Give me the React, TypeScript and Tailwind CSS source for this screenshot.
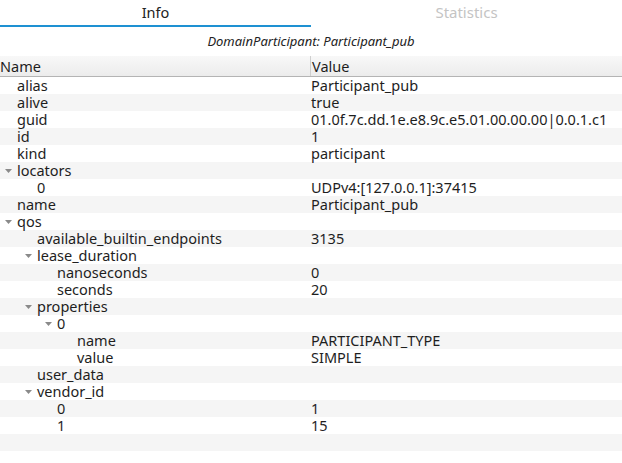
import React from "react";

type Row = { name: string; value?: string; level: number; open?: boolean };

const rows: Row[] = [
  { name: "alias", value: "Participant_pub", level: 0 },
  { name: "alive", value: "true", level: 0 },
  { name: "guid", value: "01.0f.7c.dd.1e.e8.9c.e5.01.00.00.00|0.0.1.c1", level: 0 },
  { name: "id", value: "1", level: 0 },
  { name: "kind", value: "participant", level: 0 },
  { name: "locators", level: 0, open: true },
  { name: "0", value: "UDPv4:[127.0.0.1]:37415", level: 1 },
  { name: "name", value: "Participant_pub", level: 0 },
  { name: "qos", level: 0, open: true },
  { name: "available_builtin_endpoints", value: "3135", level: 1 },
  { name: "lease_duration", level: 1, open: true },
  { name: "nanoseconds", value: "0", level: 2 },
  { name: "seconds", value: "20", level: 2 },
  { name: "properties", level: 1, open: true },
  { name: "0", level: 2, open: true },
  { name: "name", value: "PARTICIPANT_TYPE", level: 3 },
  { name: "value", value: "SIMPLE", level: 3 },
  { name: "user_data", level: 1 },
  { name: "vendor_id", level: 1, open: true },
  { name: "0", value: "1", level: 2 },
  { name: "1", value: "15", level: 2 },
  { name: "", level: 0 },
];

const indent = ["pl-[17px]", "pl-[37px]", "pl-[57px]", "pl-[77px]"];
const arrowPos = ["left-[5px]", "left-[25px]", "left-[45px]", "left-[65px]"];

const Arrow = ({ level }: { level: number }) => (
  <svg
    className={`absolute top-[7px] ${arrowPos[level]}`}
    width="7"
    height="4"
    viewBox="0 0 7 4"
  >
    <path d="M0 0 L7 0 L3.5 4 Z" fill="#8a8a8a" />
  </svg>
);

export default function App() {
  return (
    <div
      className="w-[622px] h-[463px] bg-white text-[#1e1e1e] overflow-hidden"
      style={{ fontFamily: '"Noto Sans", "DejaVu Sans", sans-serif' }}
    >
      {/* Tabs */}
      <div className="flex h-[27px]">
        <div className="w-[311px] flex flex-col">
          <div className="h-[25px] flex items-center justify-center text-[14.5px] text-[#222]">
            Info
          </div>
          <div className="h-[2px] bg-[#1e91d2]" />
        </div>
        <div className="w-[311px] h-[25px] flex items-center justify-center text-[15px] text-[#c4c4c4]">
          Statistics
        </div>
      </div>

      {/* Title */}
      <div className="h-[29px] flex items-center justify-center italic text-[13px] text-[#222]">
        DomainParticipant: Participant_pub
      </div>

      {/* Header */}
      <div className="flex h-[21px] bg-gradient-to-b from-[#f8f8f8] to-[#ececec] border-b border-[#b4b4b4] text-[14.5px] leading-[20px]">
        <div className="w-[311px] border-r border-[#cfcfcf]">Name</div>
        <div className="flex-1 pl-[1px]">Value</div>
      </div>

      {/* Tree rows */}
      <div className="text-[14.5px] leading-[17px]">
        {rows.map((r, i) => (
          <div
            key={i}
            className={`flex h-[17px] ${i % 2 === 1 ? "bg-[#f5f5f5]" : "bg-white"}`}
          >
            <div className={`relative w-[311px] whitespace-nowrap ${indent[r.level]}`}>
              {r.open && <Arrow level={r.level} />}
              {r.name}
            </div>
            <div className="flex-1 whitespace-nowrap">{r.value ?? ""}</div>
          </div>
        ))}
      </div>
    </div>
  );
}
